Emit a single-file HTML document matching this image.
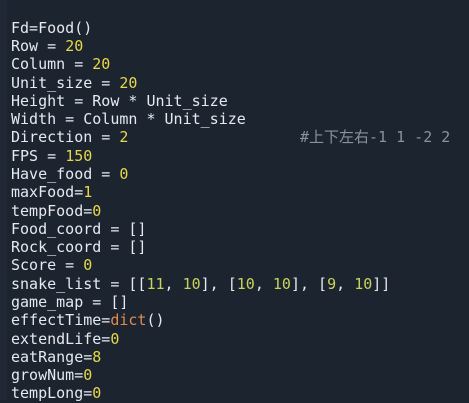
<!DOCTYPE html>
<html><head><meta charset="utf-8"><style>
html,body{margin:0;padding:0;width:469px;height:400px;overflow:hidden;background:#1c2430;}
.g{position:absolute;left:0;top:0;width:7px;height:400px;background:#1f2834;}
pre{position:absolute;left:11px;top:18.8px;margin:0;font-family:"DejaVu Sans Mono","Liberation Mono","Noto Sans CJK SC",monospace;font-size:15px;line-height:18.28px;color:#e6e9ef;}
.n{color:#e8d84a}.m{color:#c9d35a}.f{color:#e08a50}.c{color:#8a929c}
</style></head><body><div class="g"></div><pre>Fd=Food()
Row = <span class="n">20</span>
Column = <span class="n">20</span>
Unit_size = <span class="n">20</span>
Height = Row * Unit_size
Width = Column * Unit_size
Direction = <span class="n">2</span>                   <span class="c">#上下左右-1 1 -2 2</span>
FPS = <span class="n">150</span>
Have_food = <span class="n">0</span>
maxFood=<span class="n">1</span>
tempFood=<span class="n">0</span>
Food_coord = []
Rock_coord = []
Score = <span class="n">0</span>
snake_list = [[<span class="m">11</span>, <span class="m">10</span>], [<span class="m">10</span>, <span class="m">10</span>], [<span class="m">9</span>, <span class="m">10</span>]]
game_map = []
effectTime=<span class="f">dict</span>()
extendLife=<span class="n">0</span>
eatRange=<span class="n">8</span>
growNum=<span class="n">0</span>
tempLong=<span class="n">0</span></pre></body></html>
